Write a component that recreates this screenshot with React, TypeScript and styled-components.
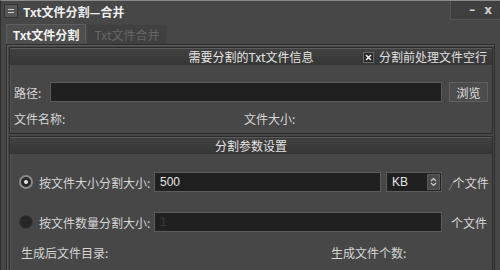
import React from "react";
import styled, { createGlobalStyle } from "styled-components";

const Global = createGlobalStyle`
  html, body { margin: 0; padding: 0; background: #474747; }
  body { font-family: "Noto Sans CJK SC", "Noto Sans", sans-serif; }
`;

const Window = styled.div`
  width: 500px;
  height: 270px;
  box-sizing: border-box;
  background: #474747;
  border-top: 1px solid #8a8a8a;
  border-left: 1px solid #2e2e2e;
  display: flex;
  flex-direction: column;
  color: #d2d2d2;
  font-size: 12px;
  overflow: hidden;
`;

const TitleBar = styled.div`
  height: 20px;
  display: flex;
  align-items: flex-start;
`;

const AppIcon = styled.div`
  width: 12px;
  height: 12px;
  margin: 3px 0 0 3px;
  border: 1px solid #333;
  background: #575757;
  display: flex;
  flex-direction: column;
  justify-content: center;
  align-items: center;
  gap: 2px;
  & > span { display: block; width: 6px; height: 1px; background: #cfcfcf; }
`;

const Title = styled.div`
  margin: 2px 0 0 5px;
  font-size: 12px;
  font-weight: bold;
  color: #f0f0f0;
  line-height: 18px;
`;

const Spacer = styled.div`
  flex: 1;
`;

const WinButtons = styled.div`
  width: 50px;
  height: 20px;
  margin-top: -1px;
  background: #3f3f3f;
  border-left: 1px solid #555;
  border-bottom: 1px solid #555;
  display: flex;
  align-items: center;
  justify-content: flex-end;
  gap: 9px;
  padding-right: 8px;
  box-sizing: border-box;
  color: #cfcfcf;
  font-weight: bold;
  font-family: "DejaVu Sans", sans-serif;
  font-size: 12px;
`;

const TabBar = styled.div`
  display: flex;
  height: 20px;
  margin-top: 3px;
  padding-left: 5px;
`;

const Tab = styled.div<{ $active?: boolean }>`
  width: 80px;
  height: 20px;
  box-sizing: border-box;
  border: 1px solid ${(p) => (p.$active ? "#5e5e5e" : "#454545")};
  border-bottom: none;
  background: ${(p) => (p.$active ? "#4e4e4e" : "#404040")};
  color: ${(p) => (p.$active ? "#f2f2f2" : "#676767")};
  font-size: 12px;
  font-weight: ${(p) => (p.$active ? "bold" : "normal")};
  display: flex;
  align-items: center;
  justify-content: center;
  line-height: 18px;
  margin-right: 1px;
`;

const Pane = styled.div`
  flex: 1;
  margin: 0 5px 0 5px;
  border: 1px solid #2e2e2e;
  box-shadow: inset 1px 1px 0 #5a5a5a;
  padding: 2px 1px 0 2px;
  display: flex;
  flex-direction: column;
  gap: 2px;
`;

const Group = styled.div<{ $h: number }>`
  height: ${(p) => p.$h}px;
  border: 1px solid #2c2c2c;
  box-shadow: inset 1px 0 0 #555;
  display: flex;
  flex-direction: column;
  box-sizing: border-box;
`;

const GroupHeader = styled.div`
  height: 17px;
  flex: none;
  background: linear-gradient(#414141, #363636);
  border-top: 1px solid #5c5c5c;
  box-sizing: border-box;
  position: relative;
  display: flex;
  align-items: center;
  justify-content: center;
  color: #e4e4e4;
  font-size: 12px;
  line-height: 16px;
`;

const HeaderCheck = styled.label`
  position: absolute;
  right: 5px;
  top: 0;
  height: 16px;
  display: flex;
  align-items: center;
  gap: 5px;
  color: #e0e0e0;
`;

const CheckBox = styled.span`
  width: 11px;
  height: 11px;
  box-sizing: border-box;
  border: 1px solid #6a6a6a;
  background: #262626;
  display: flex;
  align-items: center;
  justify-content: center;
`;

const GroupBody = styled.div<{ $pt: number }>`
  flex: 1;
  padding: ${(p) => p.$pt}px 4px 0 4px;
  display: flex;
  flex-direction: column;
`;

const Row = styled.div<{ $h: number; $mt?: number }>`
  height: ${(p) => p.$h}px;
  margin-top: ${(p) => p.$mt ?? 0}px;
  display: flex;
  align-items: center;
`;

const Label = styled.span<{ $w?: number; $ml?: number }>`
  width: ${(p) => (p.$w ? p.$w + "px" : "auto")};
  margin-left: ${(p) => p.$ml ?? 0}px;
  flex: none;
  white-space: nowrap;
  color: #d6d6d6;
  font-size: 12px;
`;

const TextInput = styled.div<{ $w: number; $dim?: boolean }>`
  width: ${(p) => p.$w}px;
  height: 20px;
  box-sizing: border-box;
  background: #202020;
  border: 1px solid #5c5c5c;
  color: ${(p) => (p.$dim ? "#3a3a3a" : "#e6e6e6")};
  font-family: "Liberation Sans", sans-serif;
  font-size: 12px;
  padding-left: 5px;
  display: flex;
  align-items: center;
  flex: none;
`;

const Button = styled.div`
  width: 40px;
  height: 20px;
  box-sizing: border-box;
  margin-left: 7px;
  background: #4c4c4c;
  border: 1px solid #5f5f5f;
  color: #e0e0e0;
  display: flex;
  align-items: center;
  justify-content: center;
  font-size: 12px;
`;

const Radio = styled.span<{ $checked?: boolean }>`
  width: 14px;
  height: 14px;
  border-radius: 50%;
  flex: none;
  box-sizing: border-box;
  border: ${(p) => (p.$checked ? "2px solid #8a8a8a" : "1px solid #3a3a3a")};
  background: ${(p) => (p.$checked ? "#2a2a2a" : "#262626")};
  display: flex;
  align-items: center;
  justify-content: center;
  margin: 0 6px 0 5px;
  & > i {
    display: ${(p) => (p.$checked ? "block" : "none")};
    width: 4px;
    height: 4px;
    border-radius: 50%;
    background: #e8e8e8;
  }
`;

const Combo = styled.div`
  width: 56px;
  height: 20px;
  box-sizing: border-box;
  margin-left: 5px;
  background: #202020;
  border: 1px solid #5c5c5c;
  display: flex;
  align-items: center;
  color: #e6e6e6;
  font-family: "Liberation Sans", sans-serif;
  font-size: 12px;
  padding-left: 5px;
  flex: none;
`;

const Spin = styled.div`
  margin-left: auto;
  margin-right: 1px;
  width: 13px;
  height: 16px;
  background: #4a4a4a;
  border: 1px solid #5a5a5a;
  box-sizing: border-box;
  display: flex;
  align-items: center;
  justify-content: center;
`;

const Slash = styled.span`
  color: #8c8c8c;
  font-style: italic;
  margin-right: -1px;
`;

export default function App() {
  return (
    <>
      <Global />
      <Window>
        <TitleBar>
          <AppIcon>
            <span />
            <span />
          </AppIcon>
          <Title>Txt文件分割—合并</Title>
          <Spacer />
          <WinButtons>
            <span>–</span>
            <span>x</span>
          </WinButtons>
        </TitleBar>
        <TabBar>
          <Tab $active>Txt文件分割</Tab>
          <Tab>Txt文件合并</Tab>
        </TabBar>
        <Pane>
          <Group $h={87}>
            <GroupHeader>
              需要分割的Txt文件信息
              <HeaderCheck>
                <CheckBox>
                  <svg width="7" height="7" viewBox="0 0 7 7">
                    <path d="M1 1L6 6M6 1L1 6" stroke="#f0f0f0" strokeWidth="1.6" />
                  </svg>
                </CheckBox>
                分割前处理文件空行
              </HeaderCheck>
            </GroupHeader>
            <GroupBody $pt={17}>
              <Row $h={20}>
                <Label $w={36}>路径:</Label>
                <TextInput $w={392} />
                <Button>浏览</Button>
              </Row>
              <Row $h={20} $mt={6}>
                <Label $w={230}>文件名称:</Label>
                <Label>文件大小:</Label>
              </Row>
            </GroupBody>
          </Group>
          <Group $h={136}>
            <GroupHeader>分割参数设置</GroupHeader>
            <GroupBody $pt={18}>
              <Row $h={20}>
                <Radio $checked>
                  <i />
                </Radio>
                <Label $w={115}>按文件大小分割大小:</Label>
                <TextInput $w={227}>500</TextInput>
                <Combo>
                  KB
                  <Spin>
                    <svg width="7" height="10" viewBox="0 0 7 10">
                      <path d="M1 4L3.5 1.5L6 4M1 6L3.5 8.5L6 6" fill="none" stroke="#cfcfcf" strokeWidth="1.2" />
                    </svg>
                  </Spin>
                </Combo>
                <Label $ml={7}>
                  <Slash>/</Slash>个文件
                </Label>
              </Row>
              <Row $h={20} $mt={20}>
                <Radio />
                <Label $w={115}>按文件数量分割大小:</Label>
                <TextInput $w={288} $dim>1</TextInput>
                <Label $ml={9}>个文件</Label>
              </Row>
              <Row $h={20} $mt={10}>
                <Label $w={310} $ml={7}>生成后文件目录:</Label>
                <Label>生成文件个数:</Label>
              </Row>
            </GroupBody>
          </Group>
        </Pane>
      </Window>
    </>
  );
}
